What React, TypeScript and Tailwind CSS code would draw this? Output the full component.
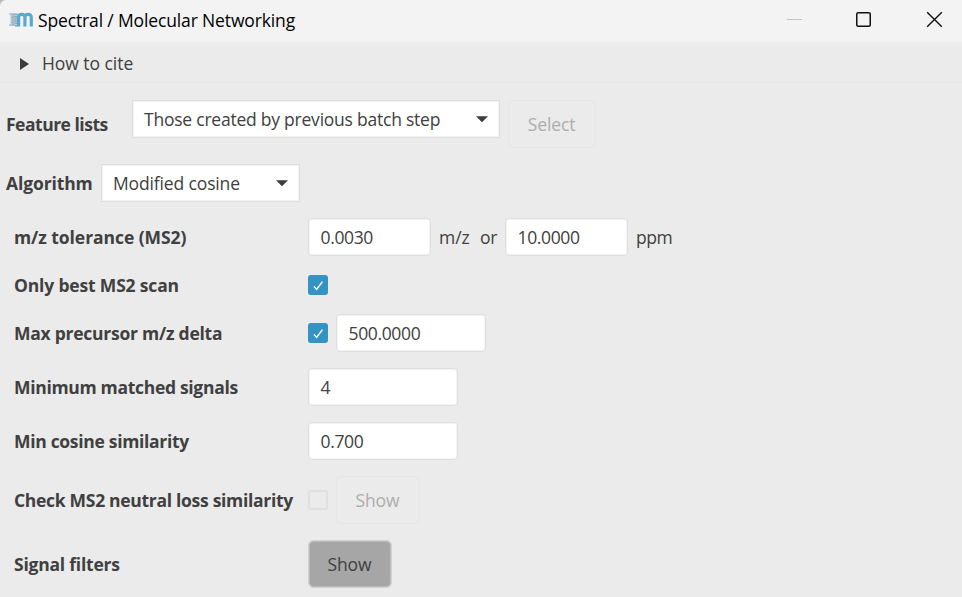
import type { ReactNode } from "react";

function Caret() {
  return (
    <svg width="12" height="7" viewBox="0 0 12 7" className="shrink-0">
      <path d="M0 0.3H12L6 6.3Z" fill="#3c3c3c" />
    </svg>
  );
}

function Combo({ size, text, tracking }: { size: string; text: string; tracking: string }) {
  return (
    <div className={`flex h-[38px] shrink-0 items-center justify-between border border-[#dedede] bg-white px-[11px] shadow-[inset_0_0_0_1px_#f3f3f3] ${size}`}>
      <span className={tracking}>{text}</span>
      <Caret />
    </div>
  );
}

function Field({ size, value }: { size: string; value: string }) {
  return (
    <div className={`flex h-[38px] shrink-0 items-center rounded-[4px] border border-[#dedede] bg-white pl-[11.5px] shadow-[inset_0_0_0_1px_#f5f5f5] ${size}`}>
      <span className="tracking-[-0.35px]">{value}</span>
    </div>
  );
}

function Checked() {
  return (
    <div className="h-5 w-5 shrink-0 rounded-[3px] bg-[#3592c4]">
      <svg width="20" height="20" viewBox="0 0 20 20" fill="none">
        <path d="M6 11.4L8.6 14.4L14.5 6.6" stroke="#fff" strokeWidth="1.4" />
      </svg>
    </div>
  );
}

function DisabledButton({ size, children }: { size: string; children: ReactNode }) {
  return (
    <div className={`flex h-12 shrink-0 items-center justify-center rounded-[5px] border border-[#e6e6e6] pr-px tracking-[-0.1px] text-[#adadad] ${size}`}>
      {children}
    </div>
  );
}

function Row({ height, label, tracking, children }: { height: string; label: string; tracking: string; children: ReactNode }) {
  return (
    <div className={`flex shrink-0 items-center pl-[14px] ${height}`}>
      <div className={`w-[294px] shrink-0 font-bold ${tracking}`}>{label}</div>
      <div className="flex items-center gap-2">{children}</div>
    </div>
  );
}

export default function App() {
  return (
    <div className="flex h-[597px] w-[962px] flex-col overflow-hidden whitespace-nowrap bg-[#ebebeb] font-['Open_Sans',sans-serif] text-[17.5px] leading-6 text-[#404040]">
      <div className="shrink-0 bg-[#b9bdb4]">
        <header className="flex h-[42px] items-center rounded-tl-[6px] bg-[#f3f3f3] pl-[9px] text-black">
          <svg width="24" height="15" viewBox="0 0 24 15" fill="none" className="mr-[5px] mt-[-4px] shrink-0">
            <path d="M0 1H6V14H0V12H1.5V3H0Z" fill="#bccdd6" />
            <path d="M4 1.5V14" stroke="#9db7c5" strokeWidth="3" strokeDasharray="2 0.5" />
            <path d="M7.2 1.5V14.5" stroke="#86a9bb" strokeWidth="3" strokeDasharray="1.5 0.4" />
            <path d="M9.6 14.5V5.4C9.6 1.3 15.9 1.3 15.9 5.4V14.5M15.9 5.4C15.9 1.3 22.3 1.3 22.3 5.4V14.5" stroke="#5ba9cf" strokeWidth="3.2" />
          </svg>
          <span className="mt-[-3px] tracking-[-0.14px]">Spectral / Molecular Networking</span>
          <svg width="158" height="18" viewBox="0 0 158 18" fill="none" className="ml-auto mr-[18px] mt-[-4px] shrink-0">
            <path d="M1 9.5H16" stroke="#c3c3c3" />
            <rect x="70.75" y="2.75" width="13.5" height="13.5" rx="1.5" stroke="#111" strokeWidth="1.5" />
            <path d="M141.2 2.2L155.8 16.8M155.8 2.2L141.2 16.8" stroke="#111" strokeWidth="1.4" />
          </svg>
        </header>
      </div>
      <div className="flex h-[41px] shrink-0 items-center border-b border-[#e7e7e7] pl-5 pt-[3px]">
        <svg width="9" height="12" viewBox="0 0 9 12" className="mr-[13px] shrink-0">
          <path d="M0 0L9 6L0 12Z" fill="#3c3c3c" />
        </svg>
        <span className="mt-[-1px] tracking-[-0.05px]">How to cite</span>
      </div>
      <div className="mt-[17px] flex h-12 shrink-0 items-start pl-[6px]">
        <div className="flex h-12 w-[126px] shrink-0 items-center font-bold tracking-[-0.49px]">Feature lists</div>
        <Combo size="w-[368px]" text="Those created by previous batch step" tracking="tracking-[-0.23px]" />
        <div className="ml-2">
          <DisabledButton size="w-[88px]">Select</DisabledButton>
        </div>
      </div>
      <div className="mt-4 mb-2 flex h-[38px] shrink-0 items-center pl-[6px]">
        <div className="w-[95px] shrink-0 font-bold tracking-[-0.12px]">Algorithm</div>
        <Combo size="w-[199px]" text="Modified cosine" tracking="tracking-[-0.14px]" />
      </div>
      <Row height="h-[54px]" label="m/z tolerance (MS2)" tracking="tracking-[-0.06px]">
        <Field size="w-[123px]" value="0.0030" />
        <span className="w-[33px]">m/z</span>
        <span className="w-[17px] tracking-[-0.3px]">or</span>
        <Field size="w-[123px]" value="10.0000" />
        <span className="tracking-[-0.4px]">ppm</span>
      </Row>
      <Row height="h-[42px]" label="Only best MS2 scan" tracking="tracking-[-0.17px]">
        <Checked />
      </Row>
      <Row height="h-[54px]" label="Max precursor m/z delta" tracking="tracking-[-0.25px]">
        <Checked />
        <Field size="w-[150px]" value="500.0000" />
      </Row>
      <Row height="h-[54px]" label="Minimum matched signals" tracking="tracking-[-0.31px]">
        <Field size="w-[150px]" value="4" />
      </Row>
      <Row height="h-[54px]" label="Min cosine similarity" tracking="tracking-[-0.31px]">
        <Field size="w-[150px]" value="0.700" />
      </Row>
      <Row height="h-16" label="Check MS2 neutral loss similarity" tracking="tracking-[-0.3px]">
        <div className="h-5 w-5 shrink-0 rounded-[3px] border-2 border-[#dfdfdf]" />
        <DisabledButton size="w-[84px]">Show</DisabledButton>
      </Row>
      <Row height="h-16" label="Signal filters" tracking="tracking-[-0.22px]">
        <div className="flex h-12 w-[84px] items-center justify-center rounded-[6px] border border-[#d2d2d2] bg-[#a6a6a6] pr-px tracking-[-0.1px] shadow-[inset_0_0_0_1px_#bcbcbc]">Show</div>
      </Row>
    </div>
  );
}
